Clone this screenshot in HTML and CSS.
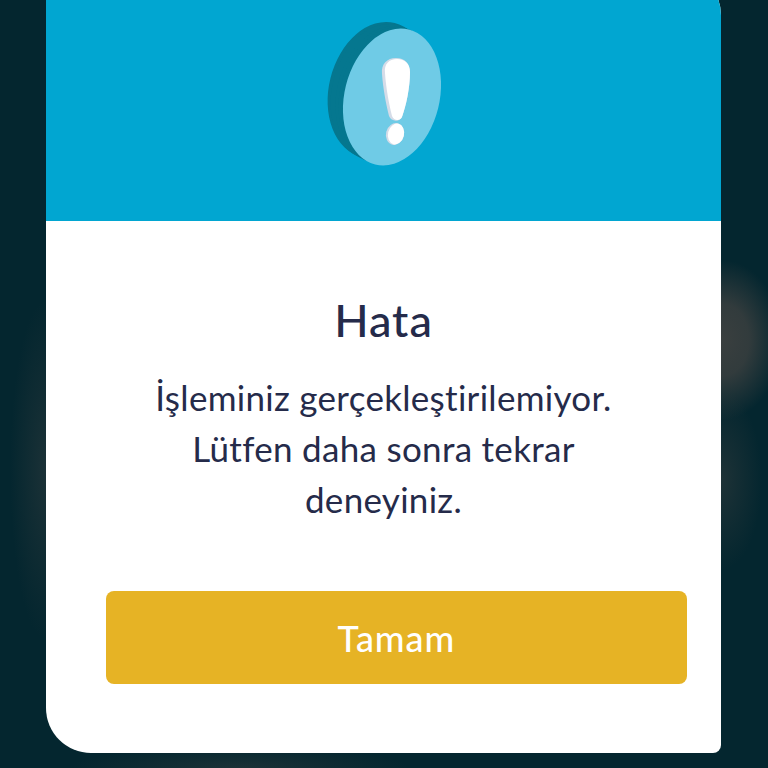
FILE: index.html
```html
<!DOCTYPE html>
<html lang="tr">
<head>
  <meta charset="UTF-8">
  <meta name="viewport" content="width=device-width, initial-scale=1.0">
  <title>Hata</title>
  <link rel="stylesheet" href="styles.css">
</head>
<body>
  <div class="card">
    <!-- Blue header with icon -->
    <div class="card-header">
      <svg class="alert-icon" viewBox="0 0 170 180" width="170" height="180">
        <g fill="#05778f">
          <ellipse cx="78" cy="90" rx="49" ry="69" transform="rotate(14 78 90)"/>
          <ellipse cx="81" cy="92" rx="49" ry="69" transform="rotate(14 81 92)"/>
          <ellipse cx="85" cy="94" rx="48" ry="69" transform="rotate(14 85 94)"/>
          <ellipse cx="88" cy="95" rx="48" ry="69" transform="rotate(14 88 95)"/>
        </g>
        <ellipse cx="92" cy="97" rx="47.5" ry="69.5" fill="#6fcbe6" transform="rotate(14 92 97)"/>
        <path d="M82 74 C81 64 87 58 96 58 C105 58 110 64 110 72 C110 88 106 106 102 117 C100 122 91 122 89 116 C86 104 83 88 82 74 Z" fill="#d5dce8"/>
        <path d="M85 73 C84 64 89 59 97 59 C105 59 110 64 110 72 C110 88 106 106 102 117 C100 121 94 121 92 116 C89 104 86 88 85 73 Z" fill="#fff"/>
        <ellipse cx="95" cy="134" rx="9" ry="11" fill="#d5dce8" transform="rotate(14 95 134)"/>
        <ellipse cx="96" cy="134" rx="8" ry="10.5" fill="#fff" transform="rotate(14 96 134)"/>
      </svg>
    </div>

    <div class="card-body">
      <h2 class="title">Hata</h2>
      <p class="message">İşleminiz gerçekleştirilemiyor. Lütfen daha sonra tekrar deneyiniz.</p>
      <button class="ok-btn" type="button">Tamam</button>
    </div>
  </div>
</body>
</html>
```

FILE: styles.css
```css
* {
  box-sizing: border-box;
}

html, body {
  height: 100%;
}

body {
  margin: 0;
  height: 768px;
  overflow: hidden;
  font-family: "Lato", "Open Sans", sans-serif;
  background-color: #04262f;
  background-image:
    radial-gradient(ellipse 60px 80px at 722px 340px, #3a3f3f 0%, rgba(58, 63, 63, 0.85) 45%, rgba(58, 63, 63, 0) 100%),
    radial-gradient(ellipse 40px 90px at 722px 480px, rgba(55, 62, 62, 0.5) 0%, rgba(55, 62, 62, 0) 100%),
    radial-gradient(ellipse 36px 170px at 46px 470px, rgba(62, 66, 66, 0.4) 0%, rgba(62, 66, 66, 0) 100%),
    radial-gradient(ellipse 170px 22px at 240px 768px, rgba(62, 66, 66, 0.4) 0%, rgba(62, 66, 66, 0) 100%);
}

.card {
  width: 675px;
  height: 783px;
  margin: -30px 0 0 46px;
  background: #fff;
  border-radius: 0 45px 8px 45px;
  overflow: hidden;
  display: flex;
  flex-direction: column;
}

.card-header {
  height: 251px;
  flex-shrink: 0;
  background: #01a6d1;
  padding: 30px 0 0 254px;
}

.alert-icon {
  display: block;
}

.card-body {
  flex: 1;
  padding-top: 73px;
  text-align: center;
}

.title {
  margin: 0;
  font-size: 45px;
  line-height: 52px;
  font-weight: 500;
  letter-spacing: 1px;
  color: #252b4a;
}

.message {
  margin: 26px auto 0;
  width: 500px;
  font-size: 35px;
  line-height: 51px;
  letter-spacing: 0.3px;
  color: #252b4a;
}

.ok-btn {
  display: block;
  width: 581px;
  height: 93px;
  margin: 66px 0 0 60px;
  padding: 0;
  border: none;
  border-radius: 8px;
  background-color: #e6b325;
  color: #fff;
  font-family: inherit;
  font-size: 36px;
  font-weight: 500;
  letter-spacing: 1px;
}
```
